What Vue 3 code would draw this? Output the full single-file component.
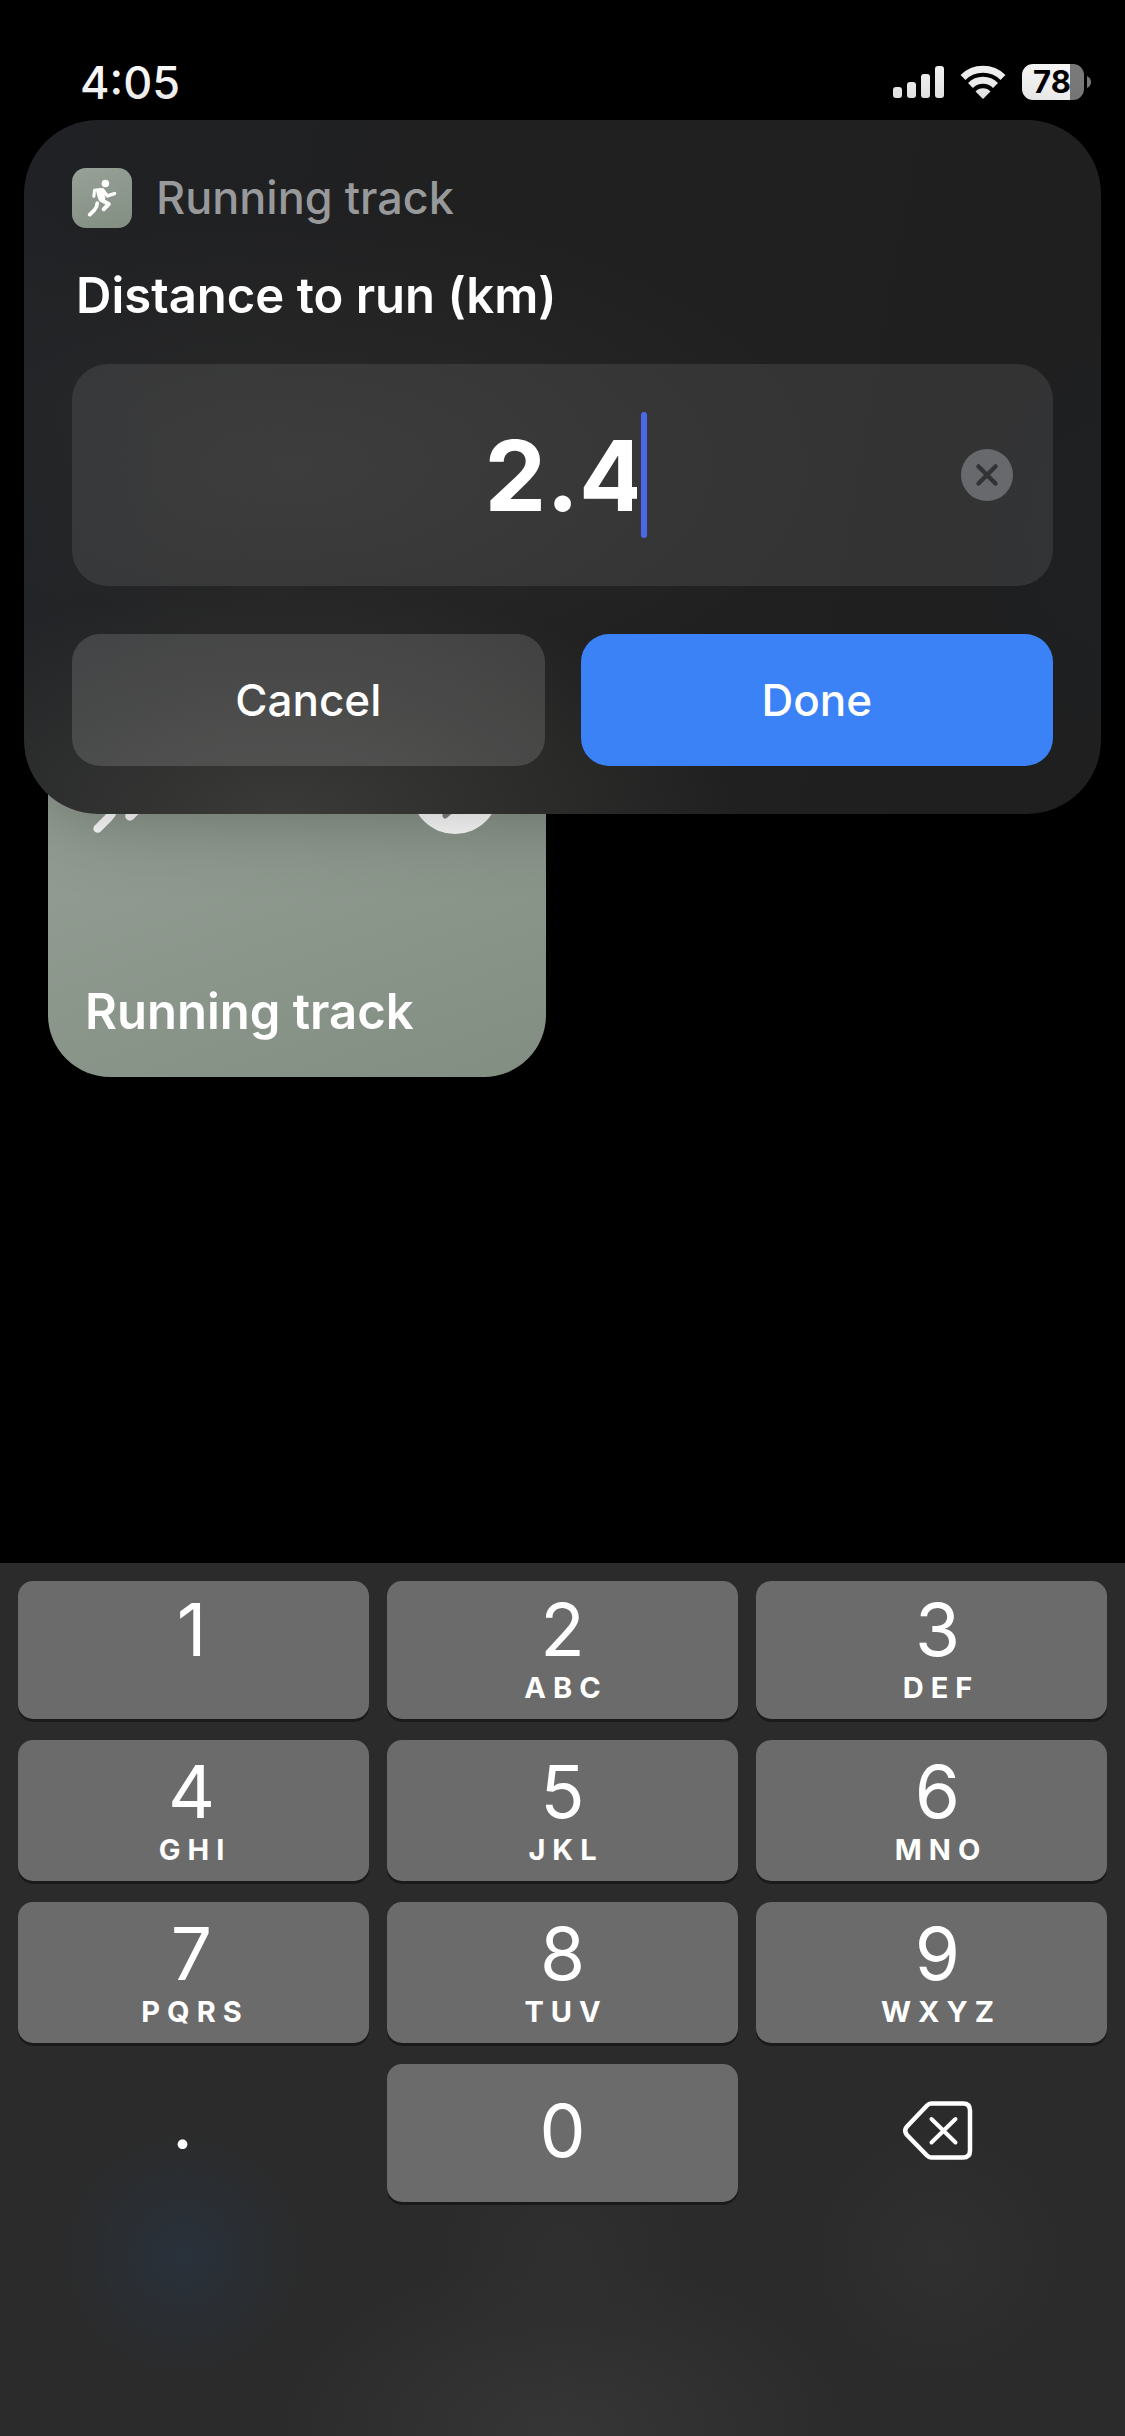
<script setup>
import { ref } from 'vue'

const distance = ref('2.4')

const keys = [
  { digit: '1', letters: '' },
  { digit: '2', letters: 'ABC' },
  { digit: '3', letters: 'DEF' },
  { digit: '4', letters: 'GHI' },
  { digit: '5', letters: 'JKL' },
  { digit: '6', letters: 'MNO' },
  { digit: '7', letters: 'PQRS' },
  { digit: '8', letters: 'TUV' },
  { digit: '9', letters: 'WXYZ' },
]

function press(char) {
  distance.value += char
}

function erase() {
  distance.value = distance.value.slice(0, -1)
}

function clear() {
  distance.value = ''
}
</script>

<template>
  <div class="screen">
    <svg class="defs" aria-hidden="true">
      <symbol id="runner" viewBox="46 36 88 112">
        <g fill="none" stroke="currentColor" stroke-linecap="round" stroke-linejoin="round">
          <path d="M66 87 L68 69 L86 67" stroke-width="9" />
          <path d="M92 68 L106 86 L127 79" stroke-width="10" />
          <path d="M84 75 L89 92" stroke-width="21" />
          <path d="M88 98 L110 110 L95 125" stroke-width="12" />
          <path d="M76 107 Q76 118 68 127 L54 141" stroke-width="11" />
        </g>
        <circle cx="100" cy="49" r="11" fill="currentColor" />
      </symbol>
    </svg>

    <header class="status">
      <time class="clock">4:05</time>
      <div class="indicators">
        <svg class="signal" viewBox="0 0 51 32" aria-label="Signal">
          <g fill="#f6f6f6">
            <rect x="0" y="21" width="9" height="11" rx="3" />
            <rect x="14" y="16" width="9" height="16" rx="3" />
            <rect x="28" y="8" width="9" height="24" rx="3" />
            <rect x="42" y="0" width="9" height="32" rx="3" />
          </g>
        </svg>
        <svg class="wifi" viewBox="0 0 46 34" aria-label="Wi-Fi">
          <g fill="none" stroke="#f6f6f6" stroke-width="7">
            <path d="M3 12.500 A28.500 28.500 0 0 1 43 12.500" />
            <path d="M10.500 20.500 A17.500 17.500 0 0 1 35.500 20.500" />
          </g>
          <path d="M23 34 L15.500 26.500 A10.500 10.500 0 0 1 30.500 26.500 Z" fill="#f6f6f6" />
        </svg>
        <div class="battery">
          <span class="level">78</span>
          <svg class="nub" viewBox="0 0 4 12"><path d="M0 0 Q4 2 4 6 Q4 10 0 12 Z" fill="#7b7b7b" /></svg>
        </div>
      </div>
    </header>

    <form class="dialog" @submit.prevent>
      <div class="app">
        <span class="app-icon"><svg class="app-runner"><use href="#runner" /></svg></span>
        <span class="app-name">Running track</span>
      </div>
      <label class="prompt" for="distance">Distance to run (km)</label>
      <div class="field">
        <span class="entry">
          <input id="distance" v-model="distance" class="value" type="text" inputmode="decimal" autocomplete="off" />
          <span class="caret"></span>
        </span>
        <button class="clear" type="button" aria-label="Clear" @click="clear">
          <svg viewBox="0 0 52 52">
            <circle cx="26" cy="26" r="26" fill="#68696c" />
            <path d="M17.500 17.500 L34.500 34.500 M34.500 17.500 L17.500 34.500" stroke="#323335" stroke-width="4.500" stroke-linecap="round" />
          </svg>
        </button>
      </div>
      <div class="actions">
        <button class="action cancel" type="button">Cancel</button>
        <button class="action done" type="submit">Done</button>
      </div>
    </form>

    <main class="shortcuts">
      <article class="card">
        <div class="card-top">
          <svg class="card-runner"><use href="#runner" /></svg>
          <svg class="play" viewBox="0 0 88 88">
            <circle cx="44" cy="44" r="44" fill="currentColor" />
            <path d="M34 20 L65 44 L34 70 Z" fill="#7b857a" stroke="#7b857a" stroke-width="5" stroke-linejoin="round" />
          </svg>
        </div>
        <h2 class="card-title">Running track</h2>
      </article>
    </main>

    <section class="keyboard" aria-label="Number pad">
      <div class="keys">
        <button v-for="key in keys" :key="key.digit" class="key" type="button" @click="press(key.digit)">
          <span class="digit">{{ key.digit }}</span>
          <span class="letters">{{ key.letters }}</span>
        </button>
        <button class="key plain point" type="button" @click="press('.')"><span class="digit">.</span></button>
        <button class="key zero" type="button" @click="press('0')"><span class="digit">0</span></button>
        <button class="key plain" type="button" aria-label="Delete" @click="erase">
          <svg class="erase" viewBox="0 0 70 60">
            <g fill="none" stroke="#fff" stroke-linecap="round" stroke-linejoin="round">
              <path d="M28 2.500 H60 Q67 2.500 67 9.500 V49.500 Q67 56.500 60 56.500 H28 Q26 56.500 24 54.500 L4 34 Q0.500 29.500 4 25.500 L24 4.500 Q26 2.500 28 2.500 Z" stroke-width="4.500" />
              <path d="M28.500 18 L52.500 41.500 M52.500 18 L28.500 41.500" stroke-width="4" />
            </g>
          </svg>
        </button>
      </div>
    </section>
  </div>
</template>

<style>
body {
  margin: 0;
  background: #000;
}
</style>

<style scoped>
.screen {
  display: flex;
  flex-direction: column;
  min-height: 100vh;
  background: #000;
  color: #fff;
  font-family: Inter, "Liberation Sans", sans-serif;
}

.defs {
  position: absolute;
  width: 0;
  height: 0;
}

button,
input {
  margin: 0;
  padding: 0;
  border: 0;
  background: none;
  color: inherit;
  font-family: inherit;
}

svg {
  display: block;
}

.status {
  display: flex;
  align-items: center;
  justify-content: space-between;
  box-sizing: border-box;
  height: 120px;
  padding: 44px 34px 0 80px;
}

.clock {
  font-size: 45px;
  font-weight: 500;
}

.indicators {
  display: flex;
  align-items: center;
  gap: 16px;
}

.signal {
  width: 51px;
  height: 32px;
}

.wifi {
  width: 46px;
  height: 34px;
}

.battery {
  display: flex;
  align-items: center;
  gap: 3px;
}

.level {
  box-sizing: border-box;
  width: 62px;
  padding-right: 2px;
  border-radius: 11px;
  background: linear-gradient(90deg, #f8f8f8 48px, #7b7b7b 48px);
  color: #000;
  font-size: 31px;
  font-weight: 700;
  line-height: 36px;
  text-align: center;
}

.nub {
  width: 4px;
  height: 12px;
}

.dialog {
  position: relative;
  z-index: 1;
  display: flex;
  flex-direction: column;
  margin: 0 24px;
  padding: 48px;
  border-radius: 74px;
  background:
    radial-gradient(ellipse 460px 230px at 24% 100%, #3a3b38, rgba(58, 59, 56, 0)),
    radial-gradient(ellipse 140px 400px at 0% 60%, rgba(34, 37, 40, 0.8), rgba(34, 37, 40, 0)),
    radial-gradient(ellipse 200px 300px at 100% 60%, rgba(30, 32, 35, 0.8), rgba(30, 32, 35, 0)),
    radial-gradient(ellipse 560px 260px at 25% 50%, rgba(43, 43, 43, 0.9), rgba(43, 43, 43, 0)),
    linear-gradient(100deg, #202124, #202020 50%, #1f1f1f);
  box-shadow: 0 0 80px rgba(0, 0, 0, 0.3);
}

.app {
  display: flex;
  align-items: center;
  gap: 24px;
}

.app-icon {
  display: grid;
  place-items: center;
  width: 60px;
  height: 60px;
  border-radius: 14px;
  background: linear-gradient(160deg, #97a197, #838e83);
}

.app-runner {
  width: 30px;
  height: 38px;
}

.app-name {
  color: #98999b;
  font-size: 45px;
  font-weight: 500;
  line-height: 60px;
}

.prompt {
  margin: 36px 4px;
  font-size: 49px;
  font-weight: 600;
  line-height: 64px;
}

.field {
  display: grid;
  grid-template-columns: 1fr auto 1fr;
  align-items: center;
  height: 222px;
  padding: 0 40px;
  border-radius: 36px;
  background: rgba(255, 255, 255, 0.09);
}

.entry {
  position: relative;
  grid-column: 2;
}

.value {
  display: block;
  box-sizing: border-box;
  width: 156px;
  height: 126px;
  padding-right: 4px;
  outline: none;
  font-size: 98px;
  font-weight: 700;
  text-align: center;
}

.caret {
  position: absolute;
  top: 0;
  left: 100%;
  width: 6px;
  height: 100%;
  border-radius: 3px;
  background: #4a69ea;
}

.clear {
  justify-self: end;
  width: 52px;
  height: 52px;
}

.actions {
  display: grid;
  grid-template-columns: 1fr 1fr;
  gap: 36px;
  margin-top: 48px;
}

.action {
  height: 132px;
  border-radius: 28px;
  font-size: 44px;
  font-weight: 500;
}

.cancel {
  background: rgba(255, 255, 255, 0.14);
}

.done {
  background: #3b82f7;
}

.shortcuts {
  display: grid;
  grid-template-columns: 1fr 1fr;
  gap: 34px;
  margin: -110px 48px 0;
}

.card {
  display: flex;
  flex-direction: column;
  justify-content: space-between;
  box-sizing: border-box;
  height: 373px;
  padding: 42px 47px 33px 37px;
  border-radius: 62px;
  background: linear-gradient(160deg, #97a197, #838e83);
}

.card-top {
  display: flex;
  justify-content: space-between;
  color: #fff;
}

.card-runner {
  width: 70px;
  height: 88px;
  margin-left: 6px;
}

.play {
  width: 88px;
  height: 88px;
}

.card-title {
  margin: 0;
  font-size: 49px;
  font-weight: 600;
  line-height: 64px;
}

.keyboard {
  margin-top: auto;
  padding: 18px 18px 234px;
  background:
    radial-gradient(circle 125px at 183px 692px, #29313b, rgba(41, 49, 59, 0)),
    radial-gradient(circle 130px at 938px 692px, #303030, rgba(48, 48, 48, 0)),
    radial-gradient(circle 130px at 50% 692px, rgba(48, 48, 48, 0.9), rgba(48, 48, 48, 0)),
    radial-gradient(ellipse 290px 180px at 50% 100%, #363636, rgba(54, 54, 54, 0)),
    #2b2b2b;
}

.keys {
  display: grid;
  grid-template-columns: repeat(3, 1fr);
  grid-template-rows: 138px 141px 141px 138px;
  gap: 21px 18px;
}

.key {
  display: flex;
  flex-direction: column;
  align-items: center;
  justify-content: flex-end;
  box-sizing: border-box;
  padding-bottom: 13px;
  border-radius: 15px;
  background: #6b6b6b;
  box-shadow: 0 3px 0 #1a1a1a;
}

.key:nth-child(3n + 1) {
  padding-right: 4px;
}

.key:nth-child(3n) {
  padding-left: 12px;
}

.digit {
  font-size: 73px;
  font-weight: 400;
  line-height: 80px;
}

.letters {
  height: 36px;
  padding-left: 7px;
  font-size: 29px;
  font-weight: 700;
  letter-spacing: 7px;
  line-height: 36px;
}

.zero,
.plain {
  justify-content: center;
  padding-bottom: 4px;
}

.plain {
  background: none;
  box-shadow: none;
}

.key.point {
  padding: 0 22px 20px 0;
}

.erase {
  width: 70px;
  height: 60px;
}
</style>
